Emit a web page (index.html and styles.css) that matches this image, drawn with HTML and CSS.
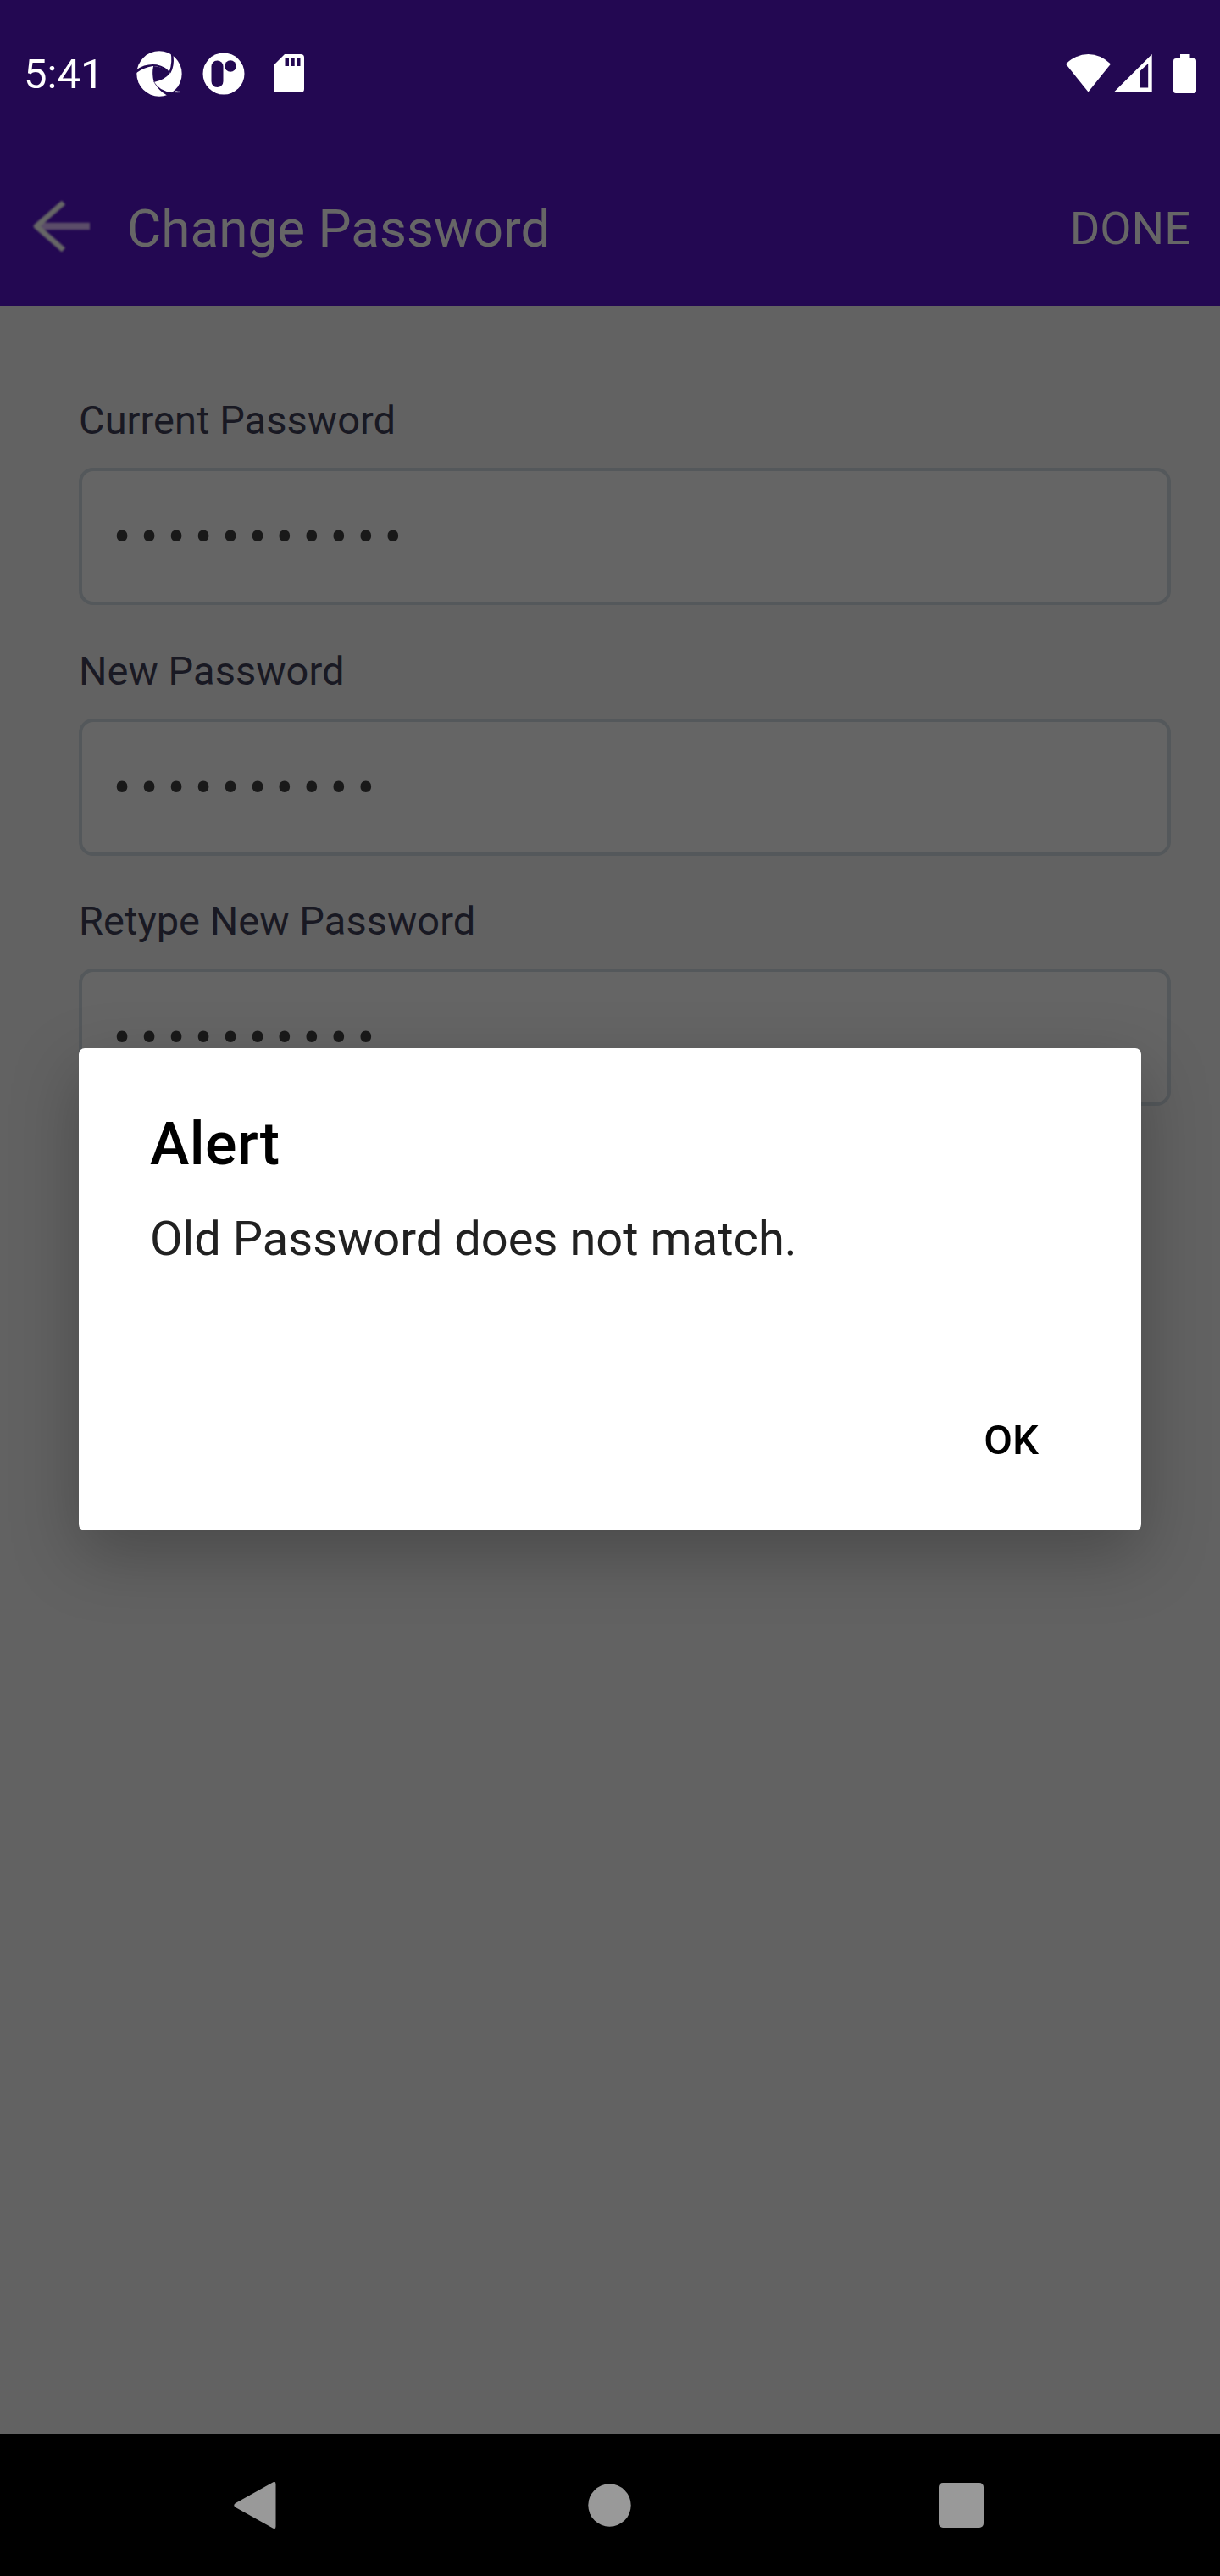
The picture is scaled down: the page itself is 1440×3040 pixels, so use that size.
FILE: index.html
```html
<!DOCTYPE html>
<html lang="en">
<head>
<meta charset="utf-8">
<title>Change Password</title>
<link rel="stylesheet" href="styles.css">
</head>
<body>
<div class="screen">
  <div class="statusbar">
    <span class="clock">5:41</span>
    <svg class="ic-wheel" width="54" height="54" viewBox="0 0 162 162">
      <circle cx="81" cy="81" r="80" fill="#fff"/>
      <g fill="#230852">
        <path d="M60 54Q95 55 119 79Q100 104 62 111Q54 82 60 54Z"/>
        <path d="M-2 69Q30 44 72 49Q104 56 119 77L116 81Q92 54 58 54Q22 60-2 80Z"/>
        <path d="M121 4Q129 40 116 75L121 79Q135 54 131 17L131 0Z"/>
        <path d="M62 109Q82 144 126 147L118 162L106 156Q80 142 62 111Z"/>
      </g>
      <path d="M138 143H144M141 143V148M146 148V143L148 146L150 143V148" fill="none" stroke="#fff" stroke-width="2"/>
    </svg>
    <svg class="ic-round" width="50" height="50" viewBox="0 0 50 50">
      <circle cx="25" cy="25" r="24.5" fill="#fff"/>
      <rect x="10.5" y="9.500" width="14" height="31.500" rx="7" fill="#230852"/>
      <circle cx="33" cy="16" r="6.800" fill="#230852"/>
    </svg>
    <svg class="ic-card" width="36" height="45" viewBox="0 0 36 45">
      <path d="M13 0H32Q36 0 36 4V41Q36 45 32 45H4Q0 45 0 41V13Z" fill="#fff"/>
      <path d="M13.500 5h4.500v9h-4.500zM20.200 5h4.500v9h-4.500zM27 5h4.500v9h-4.500z" fill="#230852"/>
    </svg>
    <svg class="ic-wifi" width="53" height="45" viewBox="0 0 53 45">
      <path d="M0 11.500Q12 0 26.500 0Q41 0 53 11.500L26.500 44.500Z" fill="#fff"/>
    </svg>
    <svg class="ic-signal" width="45" height="45" viewBox="0 0 45 45">
      <path fill-rule="evenodd" d="M0 44.500L44.700 0V44.500ZM31 19.500V39.500H40.200V11Z" fill="#fff"/>
    </svg>
    <svg class="ic-battery" width="27" height="46" viewBox="0 0 27 46">
      <path d="M8 0H19.500V5H24Q27 5 27 8V43Q27 46 24 46H3Q0 46 0 43V8Q0 5 3 5H8Z" fill="#fff"/>
    </svg>
  </div>
  <header class="appbar">
    <svg class="back" width="72" height="60" viewBox="0 0 72 60">
      <path d="M8 30H69" stroke="#5b4d69" stroke-width="8.500" fill="none"/>
      <path d="M38 2L6 30L38 58" stroke="#666" stroke-width="6.500" fill="none" stroke-linejoin="round"/>
    </svg>
    <h1 class="title">Change Password</h1>
    <span class="done">DONE</span>
  </header>
  <main class="form">
    <div class="label">Current Password</div>
    <div class="field">•••••••••••</div>
    <div class="label">New Password</div>
    <div class="field">••••••••••</div>
    <div class="label">Retype New Password</div>
    <div class="field">••••••••••</div>
  </main>
  <nav class="navbar">
    <svg class="nav-back" width="50" height="57" viewBox="0 0 50 57"><path d="M46 1.500Q49.500-.5 49.500 3.500V53.500Q49.500 57.500 46 55.500L2 31Q-1.500 28.500 2 26Z" fill="#999"/></svg>
    <svg class="nav-home" width="51" height="51" viewBox="0 0 51 51"><circle cx="25.500" cy="25.500" r="25.200" fill="#999"/></svg>
    <svg class="nav-recent" width="53" height="53" viewBox="0 0 53 53"><rect width="53" height="53" rx="5" fill="#999"/></svg>
  </nav>
  <section class="dialog">
    <h2 class="dialog-title">Alert</h2>
    <p class="dialog-text">Old Password does not match.</p>
    <span class="ok">OK</span>
  </section>
</div>
</body>
</html>
```
FILE: styles.css
```css
* { box-sizing: border-box; }
body { margin: 0; font-family: Roboto, sans-serif; }
.screen {
  position: relative;
  display: flex;
  flex-direction: column;
  width: 1440px;
  height: 3040px;
  background: #626262;
  overflow: hidden;
}
svg { display: block; flex: none; }
.statusbar {
  display: flex;
  align-items: center;
  height: 173px;
  padding: 0 28px;
  background: #230852;
}
.clock { width: 133px; font-size: 49px; line-height: 58px; color: #fff; padding-top: 2px; }
.ic-wheel { margin-left: -0.5px; }
.ic-round { margin-left: 24px; }
.ic-card { margin-left: 34.5px; }
.ic-wifi { margin-left: auto; }
.ic-signal { margin-left: 4px; }
.ic-battery { margin-left: 25px; }
.appbar {
  display: flex;
  align-items: center;
  height: 188px;
  padding: 0 35px;
  background: #230852;
}
.back { margin-left: 1.5px; filter: blur(1px); }
.title { margin: 6px 0 0 41.5px; font-size: 62px; line-height: 74px; font-weight: 400; color: #666; }
.done { margin: 5px 0 0 auto; font-size: 54.2px; line-height: 66px; color: #666; }
.form { flex: 1; padding: 108px 58px 0 93px; }
.label { height: 83px; font-size: 47px; line-height: 54px; letter-spacing: .04px; color: #191923; }
.field {
  height: 162px;
  margin-bottom: 50.6px;
  padding: 0 36.5px;
  border: 4px solid #54585b;
  border-radius: 17px;
  background: #656565;
  font-size: 63px;
  line-height: 158px;
  letter-spacing: 10.72px;
  color: #191919;
}
.navbar { display: flex; align-items: center; height: 168px; padding-left: 276px; background: #000; }
.nav-home { margin-left: 368px; }
.nav-recent { margin-left: 363px; }
.dialog {
  position: absolute;
  left: 93px;
  top: 1237px;
  display: flex;
  flex-direction: column;
  width: 1254px;
  height: 569px;
  padding: 71px 84px 0;
  border-radius: 7px;
  background: #fff;
  box-shadow: 0 28px 80px rgba(0, 0, 0, .25);
}
.dialog-title { margin: 0; font-size: 70px; line-height: 84px; font-weight: 500; letter-spacing: .4px; color: #000; }
.dialog-text { margin: 37px 0 0; font-size: 56px; line-height: 66px; letter-spacing: .03px; color: #212121; }
.ok { margin: 176px 37px 0 auto; font-size: 49px; line-height: 58px; font-weight: 500; color: #000; }
```
